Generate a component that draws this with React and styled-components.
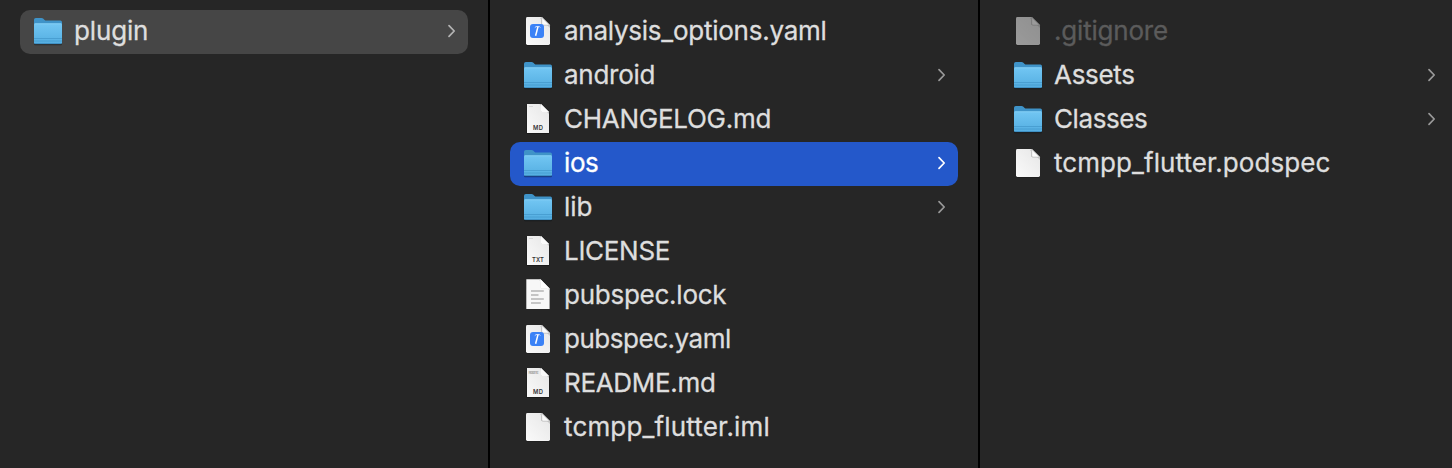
import React from 'react';
import styled, { createGlobalStyle, css } from 'styled-components';

const GlobalStyle = createGlobalStyle`
  * { box-sizing: border-box; }
  body { margin: 0; background: #262626; overflow: hidden; }
`;

const Browser = styled.main`
  display: grid;
  grid-template-columns: 490px 490px 1fr;
  height: 468px;
  background: #262626;
  color: #dedede;
  font-family: Inter, "Liberation Sans", sans-serif;
  font-size: 26px;
  font-weight: 400;
  overflow: hidden;
`;

const Column = styled.ul`
  list-style: none;
  margin: 0;
  padding: 10px 20px 0;
  border-right: ${(p) => (p.$last ? '0' : '2px solid #000')};
`;

const Row = styled.li`
  display: flex;
  align-items: center;
  width: 448px;
  height: 44px;
  padding: 0 12px;
  border-radius: 10px;
  ${(p) => p.$state === 'open' && css`background: #464646;`}
  ${(p) => p.$state === 'active' && css`background: #2458ca; color: #fff;`}
`;

const Icon = styled.svg`
  flex: none;
  width: 32px;
  height: 44px;
  opacity: ${(p) => (p.$dim ? 0.55 : 1)};
`;

const Label = styled.span`
  flex: 1;
  margin-left: 10px;
  padding-bottom: 2px;
  line-height: 42px;
  white-space: nowrap;
  -webkit-text-stroke: 0.3px currentColor;
  letter-spacing: ${(p) => p.$tracking}px;
  ${(p) => p.$dim && css`color: #5b5b5b;`}
`;

const Chevron = styled.svg`
  flex: none;
  width: 9px;
  height: 44px;
  fill: none;
  stroke: ${(p) => (p.$state === 'active' ? '#fff' : p.$state === 'open' ? '#b4b4b4' : '#999')};
  stroke-width: 1.7;
  stroke-linecap: round;
  stroke-linejoin: round;
`;

function FolderIcon() {
  return (
    <Icon viewBox="0 0 32 44">
      <rect x="2" y="33" width="28" height="2.2" rx="1" fill="#000" opacity=".35" />
      <path d="M2 9.8Q2 8 3.8 8H9.5Q10.6 8 11.4 8.7L12.6 9.9Q13.3 10.6 14.4 10.6H28.3Q30 10.6 30 12.2V20H2Z" fill="#3f93c8" />
      <path d="M2 14.4Q2 13.4 3.2 13.4H28.8Q30 13.4 30 14.4V32.4Q30 34 28.4 34H3.6Q2 34 2 32.4Z" fill="url(#folderFront)" />
      <path d="M2.6 13.8H29.4" stroke="#8bd3f8" strokeWidth=".8" />
      <path d="M2 28.5H30M2 31H30" stroke="#4499cd" strokeWidth=".8" />
      <path d="M2.6 33.6H29.4" stroke="#3986b8" strokeWidth=".8" />
    </Icon>
  );
}

function FileIcon({ kind, dim }) {
  const type = { md: 'MD', readme: 'MD', txt: 'TXT' }[kind];
  if (type) {
    return (
      <Icon viewBox="0 0 32 44">
        <path d="M4.6 6.6H19L27.4 15V35.8H4.6Z" fill="#000" opacity=".4" />
        <path d="M5 6H19L27 14V35H5Z" fill="url(#paper)" />
        <path d="M19 6V12.8Q19 14 20.2 14H27V16L17.5 6Z" fill="#aaa" opacity=".65" />
        <path d="M19 6L27 14H20.2Q19 14 19 12.8Z" fill="#fafafa" />
        {kind === 'readme'
          ? <text x="6.5" y="11.5" fontSize="4" fontWeight="600" fill="#aaa" textLength="10">Readme</text>
          : <path d="M7 8.5H11" stroke="#ccc" strokeWidth=".7" />}
        <text x="16" y="32" fontSize="5.8" fontWeight="600" fill="#333" textAnchor="middle" textLength={kind === 'txt' ? 11.8 : 10}>{type}</text>
      </Icon>
    );
  }
  if (kind === 'lines') {
    return (
      <Icon viewBox="0 0 32 44">
        <path d="M4.3 5.3H18.5L27.6 14.4V35H4.3Z" fill="#f7f7f7" />
        <path d="M16.5 5.3L27.6 16.5V14.4H20Q18.5 14.4 18.5 12.8V5.3Z" fill="#c9c9c9" />
        <path d="M18.5 5.3L27.6 14.4H20Q18.5 14.4 18.5 12.8Z" fill="#fff" />
        <path d="M9 16.9H21.8M9 20.9H16.5M9 24.9H21.8M9 28.9H18.8" stroke="#b5b5b5" strokeWidth="1.5" />
      </Icon>
    );
  }
  return (
    <Icon viewBox="0 0 32 44" $dim={dim}>
      <path d="M5.2 7.5H20L28 15.5V34.2Q28 35.5 26.8 35.5H5.2Q4 35.5 4 34.2V8.7Q4 7.5 5.2 7.5Z" fill="#000" opacity=".35" />
      <path d="M5.4 7H20L28 15V33.6Q28 35 26.6 35H5.4Q4 35 4 33.6V8.4Q4 7 5.4 7Z" fill="url(#paper)" />
      <path d="M19.2 7V15H28V18L18.2 8.5Z" fill="#999" opacity=".4" />
      <path d="M19.7 7.2L27.7 15.2H21Q19.7 15.2 19.7 14Z" fill="#fcfcfc" stroke="#a8a8a8" strokeWidth=".6" />
      {kind === 'xcode' && (
        <>
          <rect x="8" y="14" width="14" height="14" rx="3" fill="#3b82f6" />
          <path d="M12.8 17.6L14 16.6H17.4L18.4 17.4" fill="none" stroke="#cfe0ff" strokeWidth="1" />
          <path d="M16 16.6L13.6 25.8" fill="none" stroke="#fff" strokeWidth="1.5" />
        </>
      )}
    </Icon>
  );
}

function Entry({ name, kind, state, tracking = 0, dim }) {
  return (
    <Row $state={state}>
      {kind === 'folder' ? <FolderIcon /> : <FileIcon kind={kind} dim={dim} />}
      <Label $tracking={tracking} $dim={dim}>{name}</Label>
      {kind === 'folder' && (
        <Chevron viewBox="0 0 9 44" $state={state}><path d="M2 15.7L7.2 21L2 26.3" /></Chevron>
      )}
    </Row>
  );
}

const columns = [
  [{ name: 'plugin', kind: 'folder', state: 'open', tracking: -0.15 }],
  [
    { name: 'analysis_options.yaml', kind: 'xcode', tracking: -0.25 },
    { name: 'android', kind: 'folder', tracking: -0.27 },
    { name: 'CHANGELOG.md', kind: 'md', tracking: -0.27 },
    { name: 'ios', kind: 'folder', state: 'active', tracking: -0.4 },
    { name: 'lib', kind: 'folder', tracking: -0.1 },
    { name: 'LICENSE', kind: 'txt', tracking: -0.3 },
    { name: 'pubspec.lock', kind: 'lines', tracking: -0.25 },
    { name: 'pubspec.yaml', kind: 'xcode', tracking: -0.48 },
    { name: 'README.md', kind: 'readme', tracking: -0.32 },
    { name: 'tcmpp_flutter.iml', kind: 'plain', tracking: 0.16 },
  ],
  [
    { name: '.gitignore', kind: 'plain', dim: true, tracking: -0.2 },
    { name: 'Assets', kind: 'folder', tracking: -0.3 },
    { name: 'Classes', kind: 'folder', tracking: -0.42 },
    { name: 'tcmpp_flutter.podspec', kind: 'plain', tracking: 0.07 },
  ],
];

export default function App() {
  return (
    <>
      <GlobalStyle />
      <svg width="0" height="0" style={{ display: 'block' }}>
        <defs>
          <linearGradient id="folderFront" x1="0" y1="0" x2="0" y2="1">
            <stop offset="0" stopColor="#72c6f3" />
            <stop offset="1" stopColor="#54aee1" />
          </linearGradient>
          <linearGradient id="paper" x1="0" y1="1" x2="1" y2="0">
            <stop offset="0" stopColor="#fafafa" />
            <stop offset="1" stopColor="#e6e6e6" />
          </linearGradient>
        </defs>
      </svg>
      <Browser>
        {columns.map((entries, i) => (
          <Column key={i} $last={i === columns.length - 1}>
            {entries.map((entry) => <Entry key={entry.name} {...entry} />)}
          </Column>
        ))}
      </Browser>
    </>
  );
}
